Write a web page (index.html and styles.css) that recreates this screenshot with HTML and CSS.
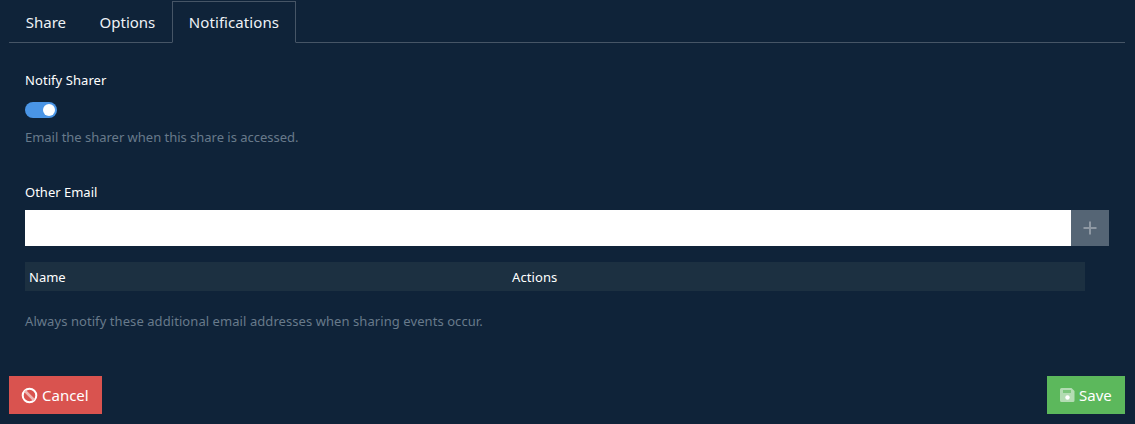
FILE: index.html
```html
<!DOCTYPE html>
<html lang="en">
<head>
<meta charset="utf-8">
<title>Share</title>
<link rel="stylesheet" href="styles.css">
</head>
<body>
<div class="panel">
  <ul class="tabs">
    <li class="tab">Share</li>
    <li class="tab">Options</li>
    <li class="tab active">Notifications</li>
  </ul>
  <div class="content">
    <section class="group notify">
      <div class="label">Notify Sharer</div>
      <div class="toggle"><span class="knob"></span></div>
      <p class="help">Email the sharer when this share is accessed.</p>
    </section>
    <section class="group other">
      <div class="label">Other Email</div>
      <div class="input-row">
        <input class="email" type="text">
        <button class="add" type="button">
          <svg width="14" height="14" viewBox="0 0 14 14"><path d="M7 0.5v13M0.5 7h13" stroke="#8e98a3" stroke-width="2" fill="none"/></svg>
        </button>
      </div>
      <div class="table-head">
        <div class="col-name">Name</div>
        <div class="col-actions">Actions</div>
      </div>
      <p class="help help-table">Always notify these additional email addresses when sharing events occur.</p>
    </section>
  </div>
  <div class="footer">
    <button class="btn cancel" type="button">
      <svg class="ico" width="17" height="17" viewBox="0 0 17 17"><circle cx="8.500" cy="8.500" r="6.800" fill="none" stroke="#fff" stroke-width="2"/><path d="M4 4l9 9" stroke="#f0b5b2" stroke-width="2.600"/></svg>
      <span>Cancel</span>
    </button>
    <button class="btn save" type="button">
      <svg class="ico" width="15" height="14" viewBox="0 0 15 14"><path d="M1.500 0h10l3 3v9.500a1.500 1.500 0 0 1-1.500 1.500h-11.500a1.500 1.500 0 0 1-1.500-1.500v-11a1.500 1.500 0 0 1 1.500-1.500z" fill="#b3dcb3"/><rect x="3" y="2" width="8" height="3" fill="#7cc67c"/><circle cx="7.500" cy="9.500" r="2.200" fill="#fff"/></svg>
      <span>Save</span>
    </button>
  </div>
</div>
</body>
</html>
```
FILE: styles.css
```css
* { box-sizing: border-box; }
html, body { margin: 0; height: 100%; }
body {
  background: #0f2339;
  color: #fff;
  font-family: "Noto Sans", "Open Sans", sans-serif;
  font-size: 13px;
  overflow: hidden;
}
.panel { padding: 1px 10px 10px 9px; height: 424px; display: flex; flex-direction: column; }
.tabs {
  list-style: none;
  margin: 0;
  padding: 0;
  display: flex;
  height: 42px;
  border-bottom: 1px solid #465566;
}
.tab {
  height: 42px;
  padding: 0 15.75px;
  font-size: 15px;
  line-height: 41px;
  border: 1px solid transparent;
  color: #eef2f6;
}
.tab.active { border-color: #465566; border-bottom-color: #0f2339; letter-spacing: 0.08px; }
.content { padding: 0 16px; flex: 1; }
.group { margin: 0; }
.notify { padding-top: 28px; }
.label { font-size: 13px; line-height: 18px; }
.notify .label { letter-spacing: 0.07px; }
.toggle {
  margin-top: 13px;
  width: 32px; height: 16px;
  border-radius: 8px;
  background: #4a95e6;
  position: relative;
}
.knob {
  position: absolute; right: 2px; top: 2px;
  width: 12px; height: 12px;
  border-radius: 50%;
  background: #fff;
}
.help { margin: 0; color: #687a8b; font-size: 13px; line-height: 18px; }
.notify .help { margin-top: 10px; letter-spacing: -0.02px; }
.other { padding-top: 37px; }
.input-row { display: flex; margin-top: 9px; height: 36px; }
.email { flex: 1; border: 0; background: #fff; height: 36px; min-width: 0; padding: 0 10px; }
.add {
  width: 38px; height: 36px; border: 0; padding: 0;
  background: #556575;
  display: flex; align-items: center; justify-content: center;
}
.table-head {
  display: flex;
  width: 1060px;
  margin-top: 16px;
  height: 29px;
  background: #1c3041;
  line-height: 30px;
  font-size: 13px;
}
.col-name { width: 483px; padding-left: 4px; }
.col-actions { padding-left: 4px; letter-spacing: 0.1px; }
.help-table { margin-top: 21px; letter-spacing: 0.07px; }
.footer { display: flex; justify-content: space-between; }
.btn {
  height: 38px; border: 0; padding: 0 12px;
  color: #fff;
  font-family: inherit;
  font-size: 15px;
  display: flex; align-items: center; gap: 4px;
}
.cancel { background: #d9534f; width: 93px; }
.save { background: #5cb85c; width: 78px; padding-left: 13px; }
.ico { flex: none; }
```
